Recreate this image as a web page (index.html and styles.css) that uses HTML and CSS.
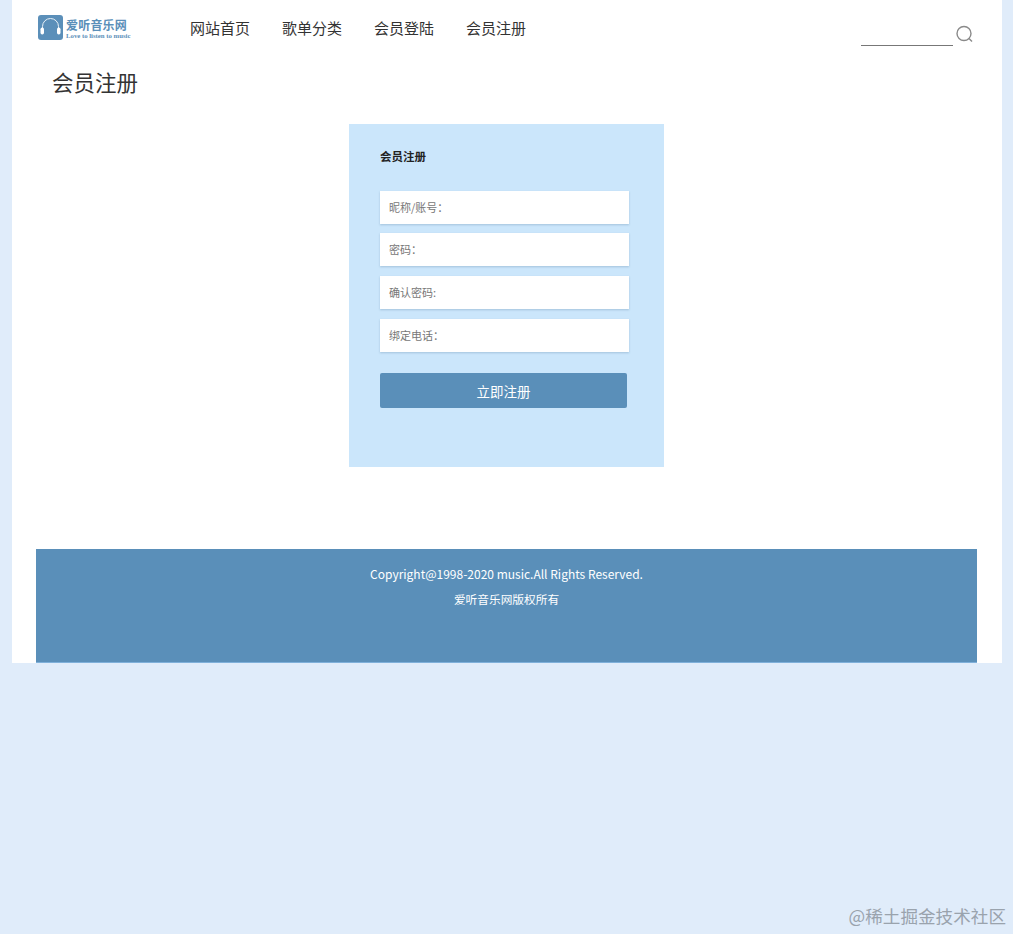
FILE: index.html
```html
<!DOCTYPE html>
<html lang="zh-CN">
<head>
<meta charset="utf-8">
<title>会员注册</title>
<link rel="stylesheet" href="styles.css">
</head>
<body>
<div class="page">
  <header class="header">
    <a class="logo" href="#">
      <svg class="logo-mark" width="25" height="25" viewBox="0 0 25 25">
        <rect x="0" y="0" width="25" height="25" rx="3" fill="#5b8fb9"/>
        <path d="M4.500 14V11.500a8 8 0 0 1 16 0V14" fill="none" stroke="#e8f1f8" stroke-width="1"/>
        <rect x="2.500" y="12.500" width="3.500" height="7" rx="1.700" fill="#fff"/>
        <rect x="19" y="12.500" width="3.500" height="7" rx="1.700" fill="#fff"/>
      </svg>
      <span class="logo-text">
        <span class="logo-cn">爱听音乐网</span>
        <span class="logo-en">Love to listen to music</span>
      </span>
    </a>
    <nav class="nav">
      <a href="#">网站首页</a>
      <a href="#">歌单分类</a>
      <a href="#">会员登陆</a>
      <a href="#">会员注册</a>
    </nav>
    <div class="search">
      <span class="search-line"></span>
      <svg class="search-icon" width="19" height="19" viewBox="0 0 19 19">
        <circle cx="9" cy="8.500" r="7" fill="none" stroke="#8a8a8a" stroke-width="1.400"/>
        <path d="M14 13.500l3 3" stroke="#8a8a8a" stroke-width="1.400"/>
      </svg>
    </div>
  </header>
  <h1 class="page-title">会员注册</h1>
  <main class="card">
    <h2 class="card-title">会员注册</h2>
    <form class="form">
      <div class="field">昵称/账号：</div>
      <div class="field">密码：</div>
      <div class="field">确认密码:</div>
      <div class="field">绑定电话：</div>
      <button class="submit" type="button">立即注册</button>
    </form>
  </main>
  <footer class="footer">
    <p>Copyright@1998-2020 music.All Rights Reserved.</p>
    <p class="footer-cn">爱听音乐网版权所有</p>
  </footer>
</div>
<div class="watermark">@稀土掘金技术社区</div>
</body>
</html>
```
FILE: styles.css
```css
* { box-sizing: border-box; }
html, body { height: 100%; }
body {
  margin: 0;
  background: #e0ecfa;
  font-family: "Noto Sans CJK SC", "Noto Sans", sans-serif;
  color: #333;
  overflow: hidden;
}
a { color: inherit; text-decoration: none; }
.page {
  width: 990px;
  height: 663px;
  margin-left: 12px;
  padding: 0 25px 0 24px;
  background: #fff;
  display: flex;
  flex-direction: column;
}
.header {
  height: 59px;
  display: flex;
  align-items: flex-start;
  padding: 15px 0 0 2px;
}
.logo { display: flex; gap: 3px; width: 152px; }
.logo-text { display: flex; flex-direction: column; color: #5b8fb9; }
.logo-cn { font-size: 12px; line-height: 15px; font-weight: 700; letter-spacing: 0.200px; margin-top: 2px; }
.logo-en { font-family: "Liberation Serif", serif; font-size: 6.750px; line-height: 7px; font-weight: 700; white-space: nowrap; }
.nav { display: flex; gap: 32px; font-size: 15px; line-height: 28px; color: #333; margin-top: -1px; }
.search {
  margin-left: auto;
  margin-right: 3px;
  display: flex;
  align-items: flex-start;
  gap: 2px;
  padding-top: 10px;
}
.search-line { width: 92px; height: 21px; border-bottom: 1px solid #777; }
.page-title {
  margin: 0;
  padding-left: 16px;
  font-size: 21.500px;
  line-height: 46px;
  font-weight: 400;
  color: #333;
}
.card {
  width: 315px;
  height: 343px;
  margin: 19px 0 0 313px;
  padding: 24px 35px 0 31px;
  background: #cbe6fb;
}
.card-title {
  margin: 0;
  font-size: 11.500px;
  line-height: 16px;
  font-weight: 700;
  color: #222;
}
.form { margin-top: 26.700px; display: flex; flex-direction: column; gap: 9.800px; }
.field {
  width: 249px;
  height: 33px;
  padding-left: 9px;
  background: #fff;
  box-shadow: 0 1px 2px rgba(90, 130, 160, .35);
  font-size: 11px;
  line-height: 33px;
  color: #777;
}
.submit {
  width: 247px;
  height: 34.700px;
  margin-top: 11.400px;
  border: 0;
  border-radius: 2px;
  background: #5a8fb9;
  color: #fff;
  font: 400 13.500px/34px "Noto Sans CJK SC", sans-serif;
  padding: 0;
}
.footer {
  margin-top: auto;
  height: 114px;
  padding-top: 12px;
  background: #5a8fb9;
  border-bottom: 1px solid #7fb0da;
  color: #fff;
  text-align: center;
  font-size: 12px;
  line-height: 25px;
}
.footer p { margin: 0; }
.footer .footer-cn { font-size: 11.700px; }
.watermark {
  position: absolute;
  right: 7px;
  bottom: 5px;
  font-size: 17.600px;
  line-height: 26px;
  color: #9aa3ad;
}
```
